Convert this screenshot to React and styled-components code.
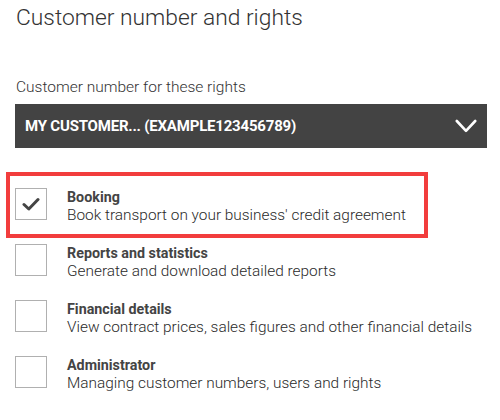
import React from "react";
import styled, { createGlobalStyle } from "styled-components";

const Global = createGlobalStyle`
  html, body { margin: 0; padding: 0; background: #fff; }
  body { font-family: Roboto, "Liberation Sans", Arial, sans-serif; color: #333; }
`;

const Page = styled.div`
  width: 500px;
  height: 420px;
  box-sizing: border-box;
  padding: 4px 13px 0 15px;
  overflow: hidden;
`;

const Title = styled.h1`
  margin: 0 0 0 1px;
  font-size: 22.8px;
  font-weight: 300;
  line-height: 28px;
  color: #333;
`;

const Label = styled.div`
  margin: 45px 0 0 1px;
  font-size: 15.5px;
  font-weight: 300;
  line-height: 20px;
  color: #333;
`;

const Select = styled.button`
  margin-top: 7px;
  width: 472px;
  height: 44px;
  display: flex;
  align-items: center;
  justify-content: space-between;
  padding: 0 10px 0 10px;
  border: none;
  background: #434343;
  color: #fff;
  font-family: inherit;
  font-size: 15px;
  font-weight: 700;
  text-transform: uppercase;
  letter-spacing: -0.2px;
  cursor: pointer;
`;

const List = styled.div`
  margin-top: 40px;
  display: flex;
  flex-direction: column;
  gap: 24px;
`;

const Row = styled.label`
  position: relative;
  height: 32px;
  display: flex;
  align-items: flex-start;
  gap: 20px;
  ${(p) =>
    p.$highlight &&
    `
    &::after {
      content: "";
      position: absolute;
      left: -9px;
      top: -16px;
      width: 422px;
      height: 66px;
      box-sizing: border-box;
      border: 4px solid #f23d3d;
      pointer-events: none;
    }
  `}
`;

const Box = styled.span`
  flex: none;
  width: 32px;
  height: 32px;
  box-sizing: border-box;
  border: 1px solid #b0b0b0;
  display: flex;
  align-items: center;
  justify-content: center;
  background: #fff;
`;

const Texts = styled.div`
  display: flex;
  flex-direction: column;
`;

const Name = styled.div`
  font-size: 14.3px;
  font-weight: 700;
  line-height: 18px;
  color: #444;
`;

const Desc = styled.div`
  font-size: 15.4px;
  font-weight: 300;
  line-height: 19px;
  color: #2a2a2a;
  white-space: nowrap;
`;

const Check = () => (
  <svg width="18" height="14" viewBox="0 0 18 14">
    <path d="M2 7.5 L6.8 12 L16 2.5" fill="none" stroke="#444" strokeWidth="3" strokeLinecap="round" strokeLinejoin="round" />
  </svg>
);

const Chevron = () => (
  <svg width="22" height="14" viewBox="0 0 22 14">
    <path d="M1.8 2 L11 11.8 L20.2 2" fill="none" stroke="#fff" strokeWidth="2.6" strokeLinecap="round" strokeLinejoin="round" />
  </svg>
);

const rights = [
  { name: "Booking", desc: "Book transport on your business' credit agreement", checked: true },
  { name: "Reports and statistics", desc: "Generate and download detailed reports" },
  { name: "Financial details", desc: "View contract prices, sales figures and other financial details" },
  { name: "Administrator", desc: "Managing customer numbers, users and rights" },
];

export default function App() {
  return (
    <>
      <Global />
      <Page>
        <Title>Customer number and rights</Title>
        <Label>Customer number for these rights</Label>
        <Select>
          <span>My customer... (EXAMPLE123456789)</span>
          <Chevron />
        </Select>
        <List>
          {rights.map((r) => (
            <Row key={r.name} $highlight={r.checked}>
              <Box>{r.checked && <Check />}</Box>
              <Texts>
                <Name>{r.name}</Name>
                <Desc>{r.desc}</Desc>
              </Texts>
            </Row>
          ))}
        </List>
      </Page>
    </>
  );
}
